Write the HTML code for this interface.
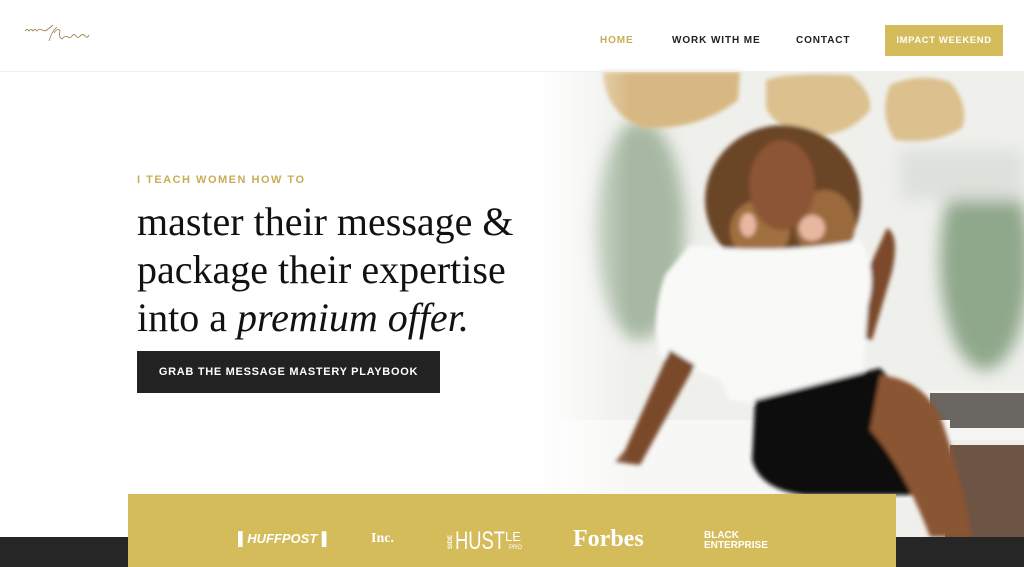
<!DOCTYPE html>
<html><head><meta charset="utf-8"><style>
*{margin:0;padding:0;box-sizing:border-box}
body{width:1024px;height:567px;overflow:hidden;background:#fff;font-family:"Liberation Sans",sans-serif;position:relative}
.abs{position:absolute}
nav a{position:absolute;top:35px;font-size:10px;font-weight:bold;letter-spacing:0.9px;color:#222;text-decoration:none}
.h{font-family:"Liberation Serif",serif;font-size:40px;color:#111;left:137px;white-space:nowrap;line-height:48px}
</style></head><body>
<svg class="abs" style="left:0;top:0" width="1024" height="567" viewBox="0 0 1024 567">
<defs>
<linearGradient id="fade" x1="0" x2="1"><stop offset="0" stop-color="#fff"/><stop offset="1" stop-color="#fff" stop-opacity="0"/></linearGradient>
<filter id="bl"><feGaussianBlur stdDeviation="8"/></filter>
<filter id="bl2"><feGaussianBlur stdDeviation="2"/></filter>
</defs>
<rect x="540" y="72" width="484" height="465" fill="#eff0ec"/>
<g filter="url(#bl)" opacity="0.75">
<ellipse cx="640" cy="230" rx="45" ry="110" fill="#8fa58a"/>
<ellipse cx="985" cy="260" rx="45" ry="110" fill="#6f8f6a"/>
<rect x="900" y="150" width="124" height="50" fill="#d8dcd6"/>
</g>
<rect x="900" y="390" width="124" height="50" fill="#f5f5f3"/>
<rect x="930" y="393" width="94" height="35" fill="#6a6662"/>
<rect x="945" y="445" width="79" height="92" fill="#6d5444"/>
<rect x="560" y="420" width="390" height="80" fill="#f7f7f5"/>
<g filter="url(#bl2)">
<path d="M603 72 L740 72 L738 100 Q700 130 645 128 Q605 115 603 72Z" fill="#d8b882"/>
<path d="M766 80 Q790 72 850 75 Q872 90 870 110 Q850 135 815 136 Q775 130 766 108Z" fill="#dcc08e"/>
<path d="M890 85 Q920 72 950 82 Q970 105 962 128 Q935 145 895 140 Q878 115 890 85Z" fill="#dcc08e"/>
<ellipse cx="783" cy="200" rx="78" ry="75" fill="#6b4427"/>
<ellipse cx="760" cy="230" rx="30" ry="30" fill="#a0703f"/>
<ellipse cx="825" cy="225" rx="30" ry="35" fill="#9a6a3e"/>
<ellipse cx="782" cy="185" rx="33" ry="45" fill="#8c5535"/>
<path d="M887 228 Q900 235 892 272 L872 340 L850 335 L868 270Z" fill="#7c4a2c"/>
<path d="M690 245 Q780 255 860 240 Q878 270 868 305 L862 390 Q800 410 730 400 L720 380 L660 355 Q650 320 665 275Z" fill="#f9f9f7"/>
<path d="M670 350 L625 450 L615 462 L640 465 L695 365Z" fill="#7a4a2c"/>
<path d="M755 400 L880 368 Q930 420 935 470 L935 495 L805 495 Q760 490 752 460Z" fill="#111"/>
<path d="M880 375 Q930 380 945 430 Q965 490 972 537 L930 537 Q905 470 870 430Z" fill="#8a5433"/>
<ellipse cx="748" cy="225" rx="8" ry="12" fill="#e8b7a0"/>
<ellipse cx="812" cy="228" rx="13" ry="13" fill="#e8b7a0"/>
</g>
<rect x="540" y="72" width="90" height="465" fill="url(#fade)"/>
<rect x="0" y="537" width="1024" height="30" fill="#262626"/>
<rect x="128" y="494" width="768" height="73" fill="#d5bc5b"/>
<line x1="0" y1="71.5" x2="1024" y2="71.5" stroke="#eee"/>
<g fill="none" stroke="#a48a5a" stroke-width="0.9">
<path d="M25 31 q2-3 4 0 q2-3 4 0 q2-3 4 0 q2-3 5-1 q3 2 6-1 q3-2 5-4"/>
<path d="M57 27 q-5 4 -8 14 M54 33 q4-6 6 -2 q-2 6 2 8 q3-4 6-2 q2 2 4-1 q2-3 4 0 q2 3 4 0 q3-3 5 0 q2 3 4-1"/>
</g>
<g fill="#fff" font-weight="bold">
<text x="238" y="543" font-size="13" font-style="italic" font-family="Liberation Sans">▌HUFFPOST▐</text>
<text x="371" y="542" font-size="14" font-family="Liberation Serif">Inc.</text>
<text x="452" y="549" font-size="6" font-family="Liberation Sans" transform="rotate(-90 452 549)">SIDE</text>
<text x="455" y="549" font-size="25" font-family="Liberation Sans" textLength="50" lengthAdjust="spacingAndGlyphs" font-weight="normal">HUST</text>
<text x="505" y="541" font-size="13" font-family="Liberation Sans" font-weight="normal">LE</text>
<text x="509" y="549" font-size="6" font-family="Liberation Sans" font-weight="normal">PRO</text>
<text x="573" y="546" font-size="24" font-family="Liberation Serif">Forbes</text>
<text x="704" y="538" font-size="10" font-family="Liberation Sans">BLACK</text>
<text x="704" y="548" font-size="10" font-family="Liberation Sans">ENTERPRISE</text>
</g>
</svg>
<nav>
<a style="left:600px;color:#c9ad55">HOME</a>
<a style="left:672px">WORK WITH ME</a>
<a style="left:796px">CONTACT</a>
</nav>
<div class="abs" style="left:885px;top:25px;width:118px;height:31px;background:#d5bc5b;color:#fff;font-size:9.5px;font-weight:bold;letter-spacing:0.6px;text-align:center;line-height:31px">IMPACT WEEKEND</div>
<div class="abs" style="left:137px;top:174px;font-size:11px;font-weight:bold;letter-spacing:1.5px;color:#c9ad55">I TEACH WOMEN HOW TO</div>
<div class="abs h" style="top:198px">master their message &amp;</div>
<div class="abs h" style="top:246px">package their expertise</div>
<div class="abs h" style="top:294px">into a <i>premium offer.</i></div>
<div class="abs" style="left:137px;top:351px;width:303px;height:42px;background:#222;color:#fff;font-size:11px;font-weight:bold;letter-spacing:0.7px;text-align:center;line-height:42px">GRAB THE MESSAGE MASTERY PLAYBOOK</div>
</body></html>
